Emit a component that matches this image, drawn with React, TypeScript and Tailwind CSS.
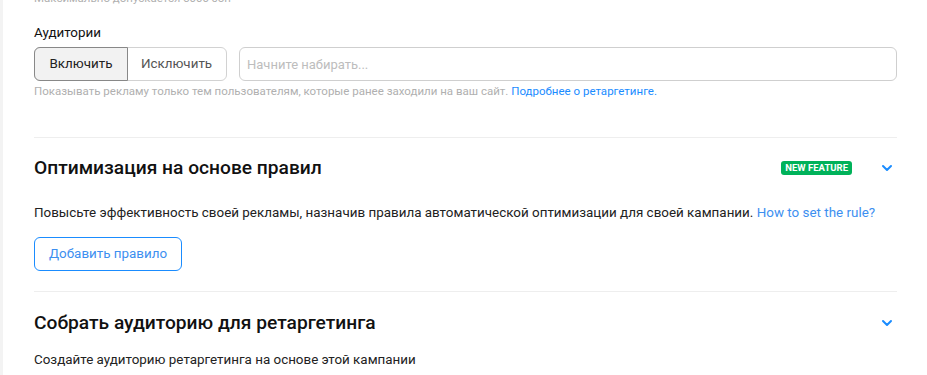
import { ChevronDown } from 'lucide-react';

function SectionHeader({ title, badge }: { title: string; badge?: boolean }) {
  return (
    <div className="flex items-center h-[24px]">
      <h2 className="flex-1 text-[19.2px] font-medium text-[#111]">{title}</h2>
      {badge && (
        <span className="mr-[27px] rounded-[3px] bg-[#00b25a] px-[4px] text-[9.5px] font-bold leading-[14px] text-white">
          NEW FEATURE
        </span>
      )}
      <ChevronDown className="mr-[2px] h-[16px] w-[16px] text-[#1a8cff]" strokeWidth={3} />
    </div>
  );
}

export default function App() {
  return (
    <div className="flex min-h-screen bg-white font-['Roboto',sans-serif]">
      <div className="w-[3px] shrink-0 bg-[#f3f3f3]" />
      <div className="flex-1 pl-[31px] pr-[30px]">
        <p className="mt-[-9px] text-[11.5px] leading-[14px] text-[#b0b0b0]">Максимально допускается 5000 зон</p>

        <p className="mt-[20px] text-[13.4px] leading-[16px] text-[#111]">Аудитории</p>
        <div className="mt-[6px] flex gap-[12px]">
          <div className="flex h-[34px] w-[193px] shrink-0 rounded-[6px] border border-[#d2d2d2] text-[13.4px]">
            <button className="-m-px w-[94px] rounded-l-[6px] border border-[#888] bg-[#f2f2f2] text-[#222]">Включить</button>
            <button className="flex-1 text-[#555]">Исключить</button>
          </div>
          <input
            placeholder="Начните набирать..."
            className="h-[34px] flex-1 rounded-[6px] border border-[#cfcfcf] px-[7px] text-[13px] outline-none placeholder:text-[#bdbdbd]"
          />
        </div>
        <p className="mt-[2px] text-[11.5px] leading-[16px] text-[#b0b0b0]">
          Показывать рекламу только тем пользователям, которые ранее заходили на ваш сайт.{' '}
          <a className="text-[#1a8cff]">Подробнее о ретаргетинге.</a>
        </p>

        <div className="mt-[38px] border-t border-[#eeeeee]" />

        <div className="pt-[18px]">
          <SectionHeader title="Оптимизация на основе правил" badge />
          <p className="mt-[25px] text-[13.42px] leading-[16px] text-[#222]">
            Повысьте эффективность своей рекламы, назначив правила автоматической оптимизации для своей кампании.{' '}
            <a className="text-[#3d8ff0]">How to set the rule?</a>
          </p>
          <button className="mt-[16px] h-[34px] rounded-[6px] border border-[#1a8cff] px-[14px] text-[13.4px] text-[#3d8ff0]">
            Добавить правило
          </button>
        </div>

        <div className="mt-[20px] border-t border-[#eeeeee]" />

        <div className="pt-[19px]">
          <SectionHeader title="Собрать аудиторию для ретаргетинга" />
          <p className="mt-[17px] text-[13.4px] leading-[16px] text-[#222]">Создайте аудиторию ретаргетинга на основе этой кампании</p>
        </div>
      </div>
    </div>
  );
}
